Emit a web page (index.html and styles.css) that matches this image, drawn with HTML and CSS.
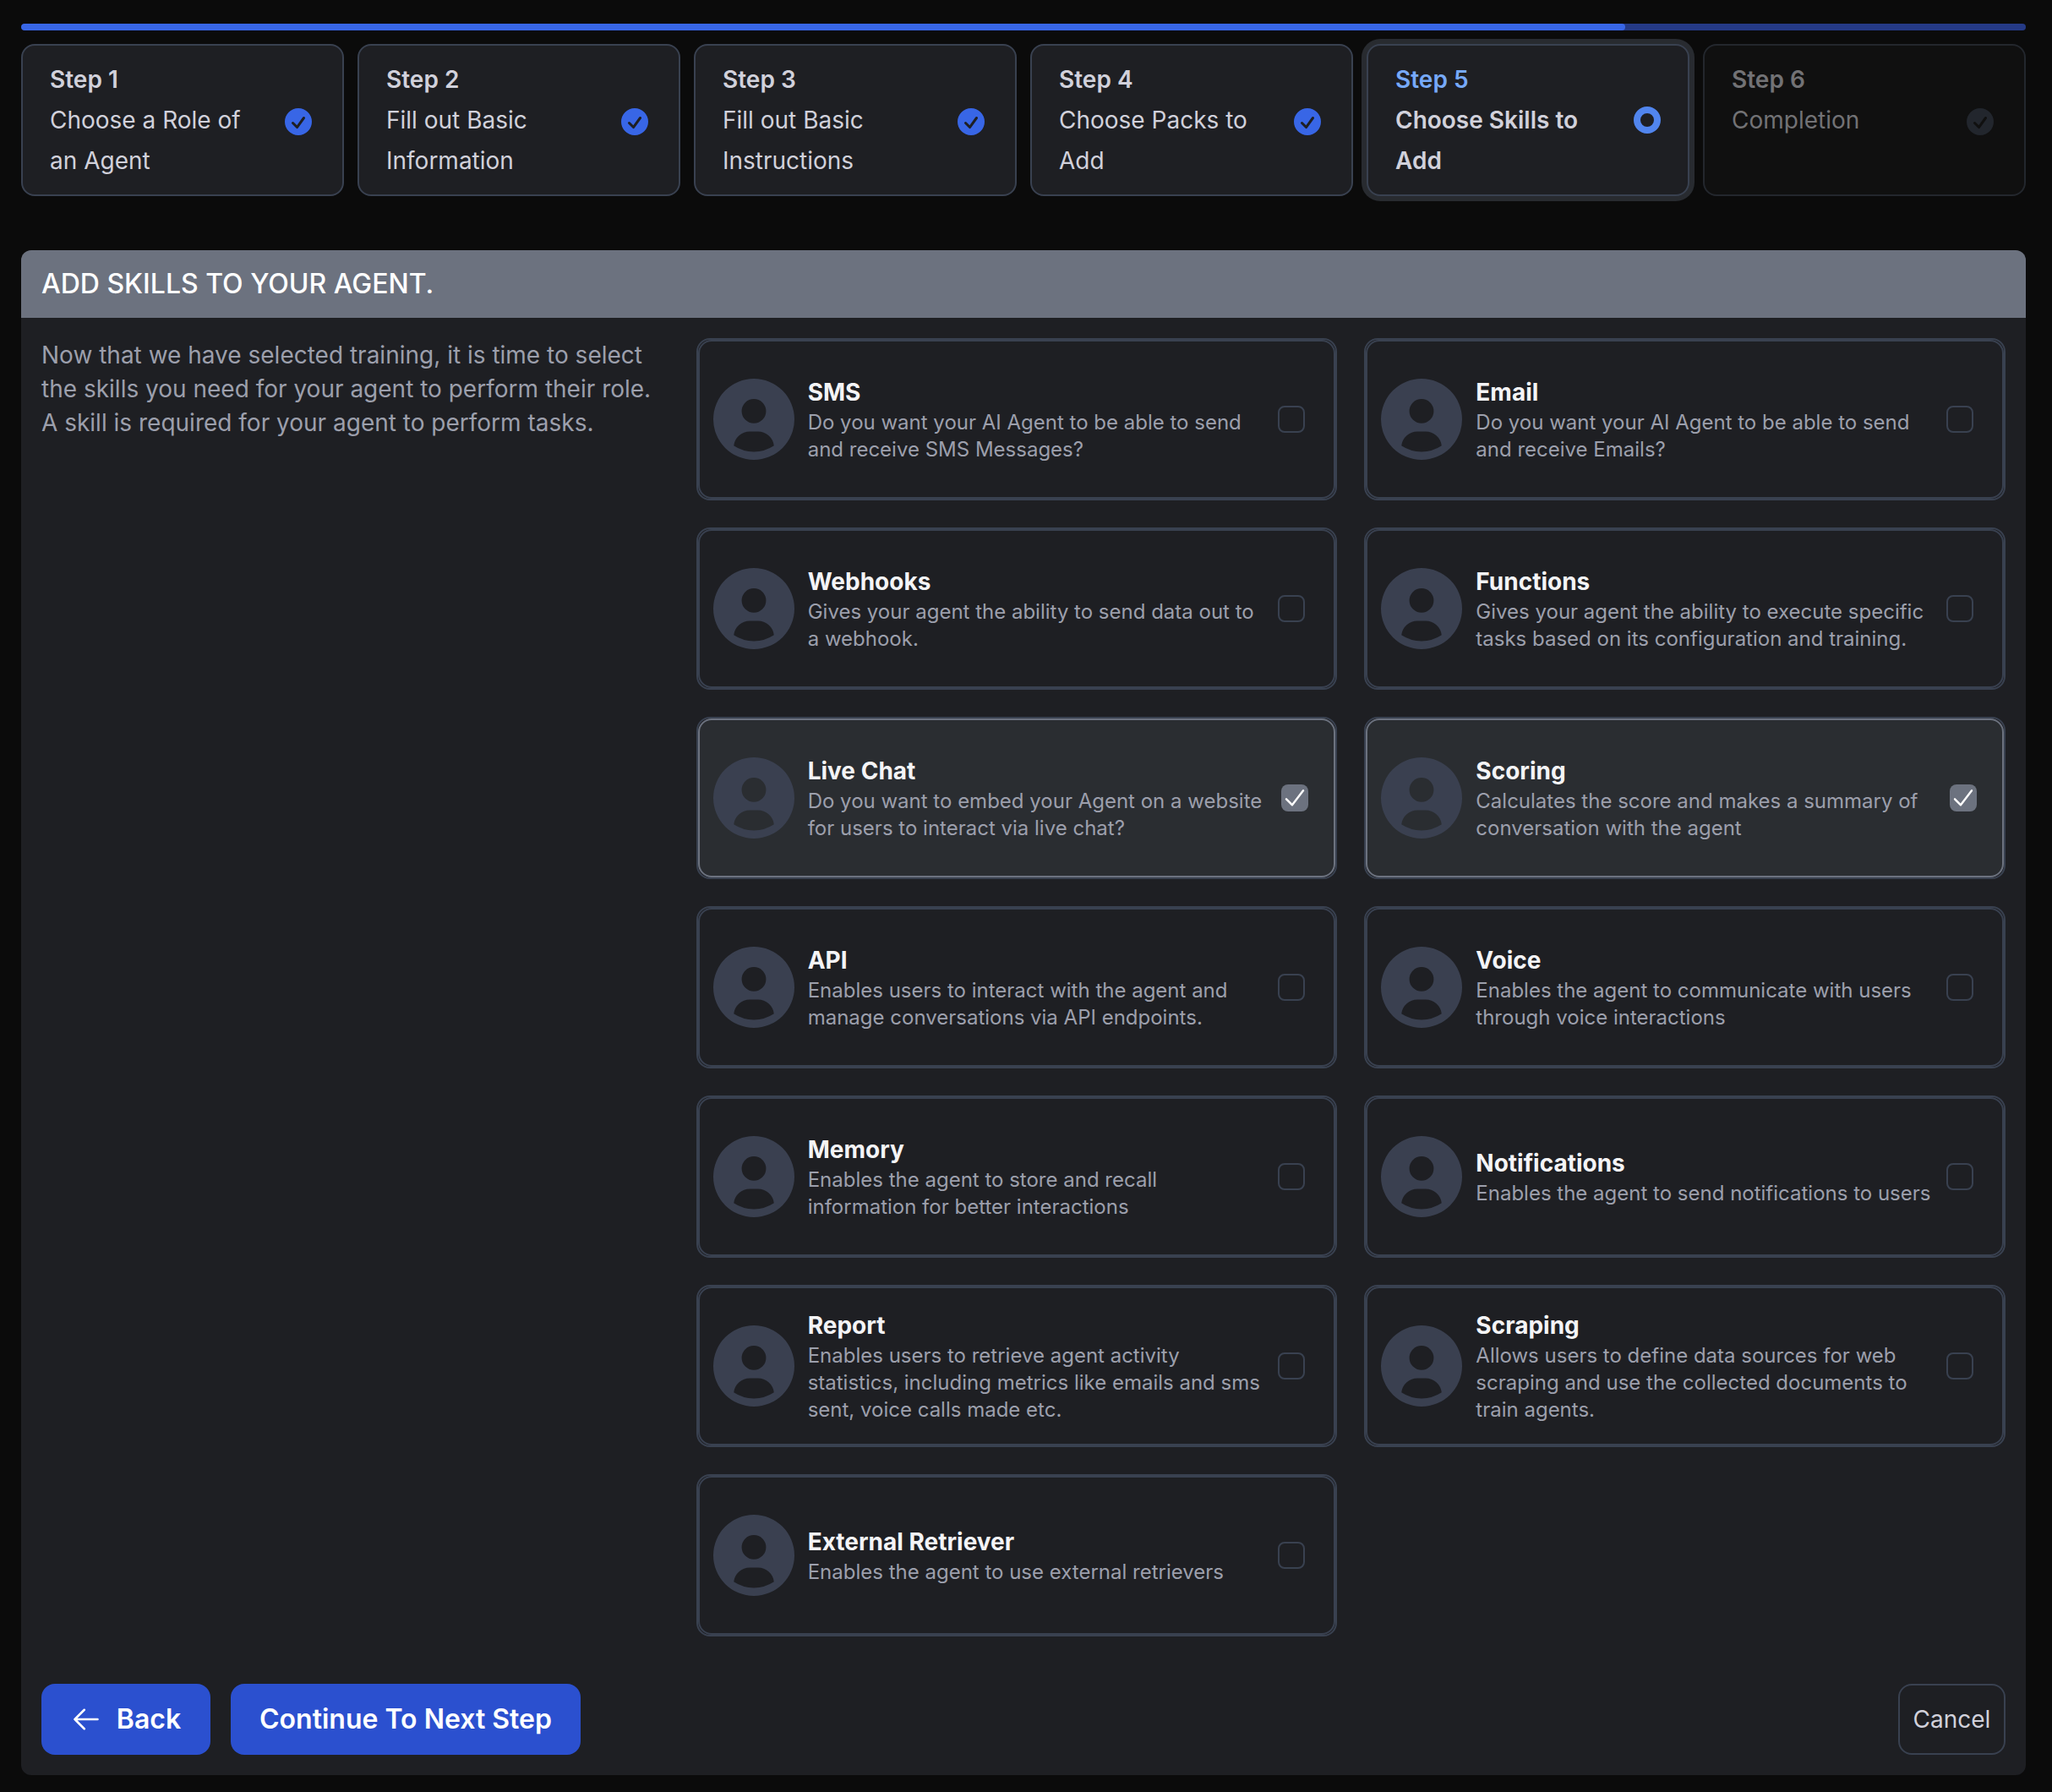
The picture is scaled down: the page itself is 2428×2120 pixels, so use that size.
FILE: index.html
```html
<!DOCTYPE html>
<html lang="en">
<head>
<meta charset="utf-8">
<title>Add skills to your agent</title>
<link rel="stylesheet" href="styles.css">
</head>
<body>
<svg class="sprite" aria-hidden="true">
  <symbol id="i-done" viewBox="0 0 20 20"><path fill="currentColor" fill-rule="evenodd" clip-rule="evenodd" d="M10 18a8 8 0 100-16 8 8 0 000 16zm3.857-9.809a.75.75 0 00-1.214-.882l-3.483 4.79-1.88-1.88a.75.75 0 10-1.06 1.061l2.5 2.5a.75.75 0 001.137-.089l4-5.5z"/></symbol>
  <symbol id="i-user" viewBox="0 0 20 20"><path fill="currentColor" d="M10 0a10 10 0 1 0 10 10A10.011 10.011 0 0 0 10 0Zm0 5a3 3 0 1 1 0 6 3 3 0 0 1 0-6Zm0 13a8.949 8.949 0 0 1-4.951-1.488A3.987 3.987 0 0 1 9 13h2a3.987 3.987 0 0 1 3.951 3.512A8.949 8.949 0 0 1 10 18Z"/></symbol>
  <symbol id="i-tick" viewBox="0 0 32 32"><path fill="none" stroke="currentColor" stroke-width="2.4" stroke-linecap="round" stroke-linejoin="round" d="M6 17.3L13 24.3L26 7.3"/></symbol>
</svg>
<main class="page">
  <div class="progress"><div class="progress-fill" style="width:80%"></div></div>
  <ol class="steps">
    <li class="step"><div class="step-no">Step 1</div><div class="step-row"><span class="step-name">Choose a Role of an Agent</span><svg class="step-icon"><use href="#i-done"/></svg></div></li>
    <li class="step"><div class="step-no">Step 2</div><div class="step-row"><span class="step-name">Fill out Basic Information</span><svg class="step-icon"><use href="#i-done"/></svg></div></li>
    <li class="step"><div class="step-no">Step 3</div><div class="step-row"><span class="step-name">Fill out Basic Instructions</span><svg class="step-icon"><use href="#i-done"/></svg></div></li>
    <li class="step"><div class="step-no">Step 4</div><div class="step-row"><span class="step-name">Choose Packs to Add</span><svg class="step-icon"><use href="#i-done"/></svg></div></li>
    <li class="step step-current"><div class="step-no">Step 5</div><div class="step-row"><span class="step-name">Choose Skills to Add</span><span class="step-dot"></span></div></li>
    <li class="step step-todo"><div class="step-no">Step 6</div><div class="step-row"><span class="step-name">Completion</span><svg class="step-icon"><use href="#i-done"/></svg></div></li>
  </ol>

  <section class="panel">
    <h1 class="panel-title">ADD SKILLS TO YOUR AGENT.</h1>
    <div class="panel-body">
      <p class="intro">Now that we have selected training, it is time to select the skills you need for your agent to perform their role. A skill is required for your agent to perform tasks.</p>
      <div class="skills">
        <div class="skill"><label class="skill-in"><svg class="avatar"><use href="#i-user"/></svg><span class="skill-text"><b class="skill-name">SMS</b><span class="skill-desc">Do you want your AI Agent to be able to send and receive SMS Messages?</span></span><span class="box"></span></label></div>
        <div class="skill"><label class="skill-in"><svg class="avatar"><use href="#i-user"/></svg><span class="skill-text"><b class="skill-name">Email</b><span class="skill-desc">Do you want your AI Agent to be able to send and receive Emails?</span></span><span class="box"></span></label></div>
        <div class="skill"><label class="skill-in"><svg class="avatar"><use href="#i-user"/></svg><span class="skill-text"><b class="skill-name">Webhooks</b><span class="skill-desc">Gives your agent the ability to send data out to a webhook.</span></span><span class="box"></span></label></div>
        <div class="skill"><label class="skill-in"><svg class="avatar"><use href="#i-user"/></svg><span class="skill-text"><b class="skill-name">Functions</b><span class="skill-desc">Gives your agent the ability to execute specific tasks based on its configuration and training.</span></span><span class="box"></span></label></div>
        <div class="skill skill-on"><label class="skill-in"><svg class="avatar"><use href="#i-user"/></svg><span class="skill-text"><b class="skill-name">Live Chat</b><span class="skill-desc">Do you want to embed your Agent on a website for users to interact via live chat?</span></span><svg class="box"><use href="#i-tick"/></svg></label></div>
        <div class="skill skill-on"><label class="skill-in"><svg class="avatar"><use href="#i-user"/></svg><span class="skill-text"><b class="skill-name">Scoring</b><span class="skill-desc">Calculates the score and makes a summary of conversation with the agent</span></span><svg class="box"><use href="#i-tick"/></svg></label></div>
        <div class="skill"><label class="skill-in"><svg class="avatar"><use href="#i-user"/></svg><span class="skill-text"><b class="skill-name">API</b><span class="skill-desc">Enables users to interact with the agent and manage conversations via API endpoints.</span></span><span class="box"></span></label></div>
        <div class="skill"><label class="skill-in"><svg class="avatar"><use href="#i-user"/></svg><span class="skill-text"><b class="skill-name">Voice</b><span class="skill-desc">Enables the agent to communicate with users through voice interactions</span></span><span class="box"></span></label></div>
        <div class="skill"><label class="skill-in"><svg class="avatar"><use href="#i-user"/></svg><span class="skill-text"><b class="skill-name">Memory</b><span class="skill-desc">Enables the agent to store and recall information for better interactions</span></span><span class="box"></span></label></div>
        <div class="skill"><label class="skill-in"><svg class="avatar"><use href="#i-user"/></svg><span class="skill-text"><b class="skill-name">Notifications</b><span class="skill-desc">Enables the agent to send notifications to users</span></span><span class="box"></span></label></div>
        <div class="skill"><label class="skill-in"><svg class="avatar"><use href="#i-user"/></svg><span class="skill-text"><b class="skill-name">Report</b><span class="skill-desc">Enables users to retrieve agent activity statistics, including metrics like emails and sms sent, voice calls made etc.</span></span><span class="box"></span></label></div>
        <div class="skill"><label class="skill-in"><svg class="avatar"><use href="#i-user"/></svg><span class="skill-text"><b class="skill-name">Scraping</b><span class="skill-desc">Allows users to define data sources for web scraping and use the collected documents to train agents.</span></span><span class="box"></span></label></div>
        <div class="skill"><label class="skill-in"><svg class="avatar"><use href="#i-user"/></svg><span class="skill-text"><b class="skill-name">External Retriever</b><span class="skill-desc">Enables the agent to use external retrievers</span></span><span class="box"></span></label></div>
      </div>
    </div>
    <footer class="actions">
      <button class="btn btn-back"><svg class="arrow" viewBox="0 0 24 24"><path d="M10.5 19.5L3 12m0 0l7.5-7.5M3 12h18"/></svg><span class="btn-label">Back</span></button>
      <button class="btn btn-next"><span class="btn-label">Continue To Next Step</span></button>
      <button class="btn-cancel">Cancel</button>
    </footer>
  </section>
</main>
</body>
</html>
```
FILE: styles.css
```css
* { box-sizing: border-box; margin: 0; padding: 0; }
body { background: #0b0b0b; color: #d1d1db; font: 28px/48px Inter, "Liberation Sans", sans-serif; }
.sprite { display: none; }
.page { padding: 28px 31px 20px 25px; min-height: 2120px; }

.progress { height: 8px; border-radius: 4px; background: #253a86; overflow: hidden; }
.progress-fill { height: 100%; border-radius: 4px; background: #3866e6; }

.steps { list-style: none; display: grid; grid-template-columns: repeat(6, 1fr); gap: 16px; margin-top: 16px; }
.step { height: 180px; padding: 16px 32px; border: 2px solid #394150; border-radius: 16px; background: #1e1f23; }
.step-no { font-weight: 600; }
.step-row { display: flex; align-items: flex-start; justify-content: space-between; }
.step-name { width: 250px; }
.step-icon { flex: none; width: 40px; height: 40px; margin-top: 6px; color: #3866e6; }
.step-current { box-shadow: 0 0 0 6px #282b30; }
.step-current .step-no { color: #76a9fa; }
.step-current .step-name { font-weight: 600; }
.step-dot { flex: none; width: 32px; height: 32px; margin-top: 8px; border: 8px solid #5185ee; border-radius: 50%; }
.step-todo { background: #101010; border-color: #23272d; color: #727275; }
.step-todo .step-icon { color: #22262d; }

.panel { margin-top: 64px; border-radius: 12px; background: #1e1f23; overflow: hidden; }
.panel-title { height: 80px; padding: 0 24px; background: #6c727f; color: #fff; font-size: 32px; font-weight: 500; line-height: 80px; }
.panel-body { display: grid; grid-template-columns: 1fr 2fr; padding: 24px 24px 56px; }
.intro { padding-right: 48px; color: #9c9fac; line-height: 40px; }
.skills { display: grid; grid-template-columns: 1fr 1fr; gap: 32px; }
.skill { height: 192px; border: 2px solid #394150; border-radius: 16px; }
.skill-in { display: flex; align-items: center; gap: 16px; height: 100%; padding: 0 34px 0 16px; border: 2px solid #394150; border-radius: 16px; }
.avatar { flex: none; width: 96px; height: 96px; color: #3a4050; }
.skill-text { flex: 1; min-width: 0; }
.skill-name, .skill-desc { display: block; }
.skill-name { color: #f4f4f6; font-weight: 700; line-height: 40px; }
.skill-desc { color: #9c9fac; font-size: 24px; line-height: 32px; }
.box { flex: none; width: 32px; height: 32px; border: 2px solid #394150; border-radius: 8px; }
.skill-on .skill-in { padding-right: 30px; border-color: #6c727f; background: #2a2d31; }
.skill-on .box { border: 0; background: #6c727f; color: #fff; }

.actions { display: flex; align-items: center; gap: 24px; padding: 0 24px 24px; }
button { display: flex; align-items: center; justify-content: center; height: 84px; border: 0; border-radius: 16px; font-family: inherit; }
.btn { background: #2b50cf; color: #fff; font-size: 32px; font-weight: 600; }
.btn-back { width: 200px; gap: 18px; }
.btn-label { padding-bottom: 2px; }
.btn-next { width: 414px; }
.arrow { width: 36px; height: 36px; fill: none; stroke: currentColor; stroke-width: 1.7; stroke-linecap: round; stroke-linejoin: round; }
.btn-cancel { width: 127px; margin-left: auto; border: 2px solid #394150; background: none; color: #d1d1db; font-size: 28px; font-weight: 400; }
```
